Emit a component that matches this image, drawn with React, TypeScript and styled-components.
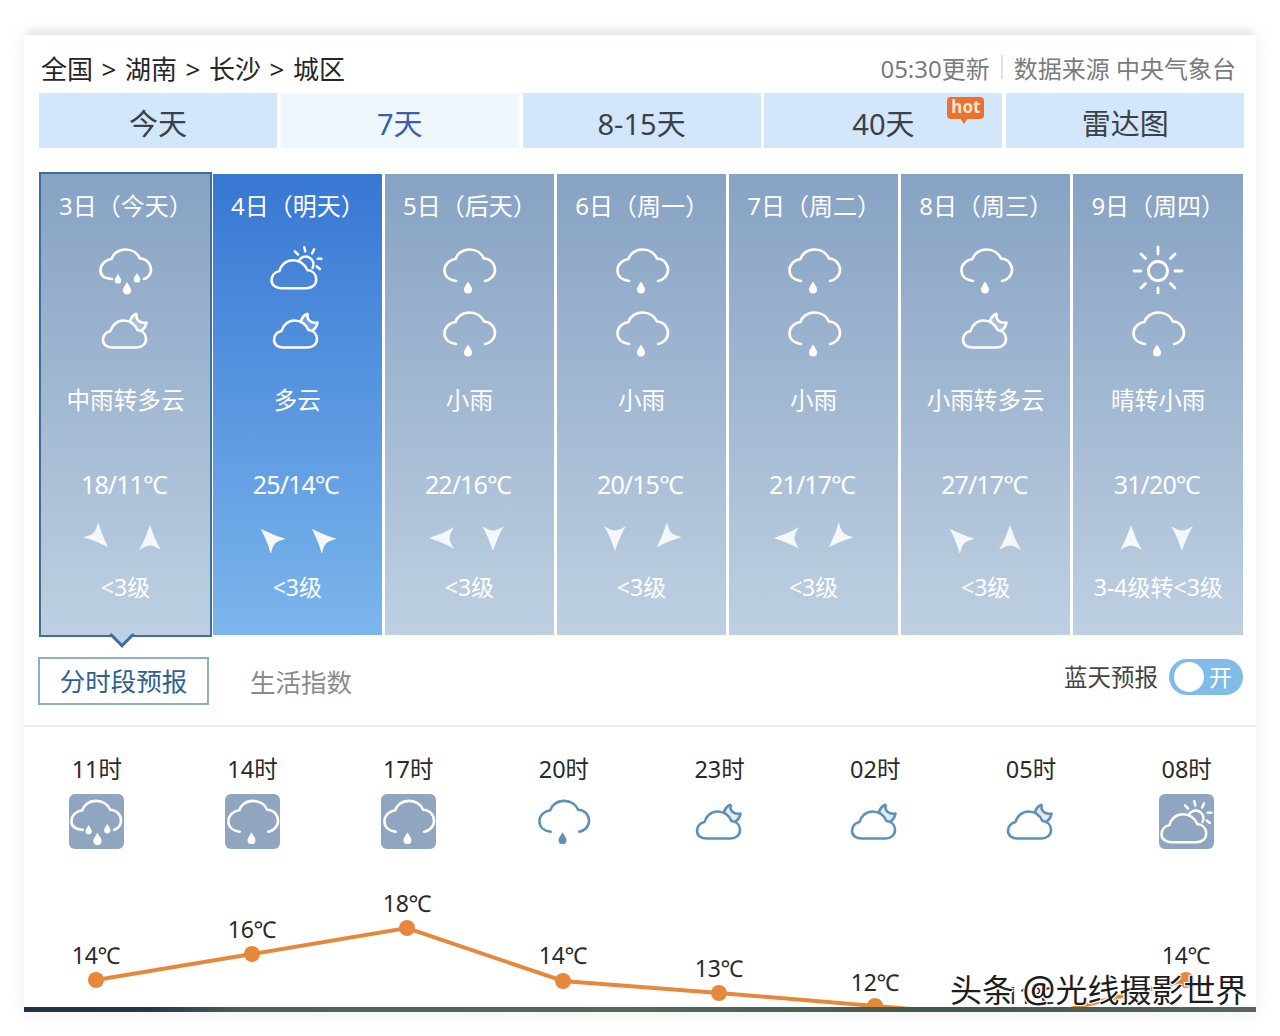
import React from "react";
import styled, { createGlobalStyle } from "styled-components";

const FONT = `"Noto Sans", "Noto Sans CJK SC", sans-serif`;

const Global = createGlobalStyle`
  html, body { margin: 0; padding: 0; background: #fff; font-family: ${FONT}; }
  body { height: 1036px; overflow: hidden; }
`;

const Page = styled.div`
  padding: 35px 24px 0;
  height: 1036px;
  box-sizing: border-box;
`;
const Card = styled.div`
  position: relative;
  width: 1232px;
  height: 977px;
  background: #fff;
  box-shadow: 0 0 16px rgba(110, 120, 130, 0.14), 0 -10px 5px -4px rgba(110, 120, 130, 0.1);
  overflow: hidden;
  display: flex;
  flex-direction: column;
`;
const Header = styled.div`
  display: flex;
  justify-content: space-between;
  align-items: center;
  height: 58px;
  padding: 0 20px 0 17px;
  box-sizing: border-box;
`;
const Crumb = styled.div`
  font-size: 26px;
  color: #262626;
  padding-top: 8px;
  word-spacing: 1.8px;
`;
const Meta = styled.div`
  font-size: 24px;
  color: #7b7b7b;
  padding-top: 6px;
  display: flex;
  align-items: center;
`;
const Sep = styled.span`
  width: 2px;
  height: 24px;
  background: #e2e2e2;
  margin: 0 11px;
`;
const Tabs = styled.div`
  display: grid;
  grid-template-columns: repeat(5, 238px);
  column-gap: 3.8px;
  margin-left: 15px;
  height: 55px;
`;
const Tab = styled.div<{ $on?: boolean }>`
  position: relative;
  display: flex;
  align-items: center;
  justify-content: center;
  background: ${(p) => (p.$on ? "#eef6fe" : "#d2e7fb")};
  color: ${(p) => (p.$on ? "#3c5fa6" : "#3a4148")};
  font-size: 29px;
  padding-top: 2px;
  box-sizing: border-box;
`;
const Hot = styled.span`
  position: absolute;
  left: 183px;
  top: 4px;
  width: 37px;
  height: 22px;
  border-radius: 4px;
  background: #e8732f;
  color: #f6e2d0;
  font: bold 17px/20px ${FONT};
  text-align: center;
  &::after {
    content: "";
    position: absolute;
    left: 13px;
    top: 21px;
    border: 4px solid transparent;
    border-top: 6px solid #e8732f;
    border-bottom: 0;
  }
`;
const Days = styled.div`
  display: flex;
  gap: 3.4px;
  margin: 26px 0 0 15px;
  height: 461px;
`;
const Day = styled.div<{ $active?: boolean; $sel?: boolean }>`
  position: relative;
  flex: none;
  width: ${(p) => (p.$sel ? 173 : 168.7)}px;
  box-sizing: border-box;
  color: #fff;
  display: flex;
  flex-direction: column;
  align-items: center;
  background: ${(p) =>
    p.$active
      ? "linear-gradient(#3777d4, #7cb6ec)"
      : "linear-gradient(#87a2c3, #bed0e2)"};
  ${(p) => (p.$sel ? `border: 2px solid #3f6f9e; margin: -2px -2.4px -2px 0;` : "")}
  &:last-child {
    width: 169.8px;
  }
`;
const Arrow = styled.span`
  position: absolute;
  left: 72px;
  bottom: -9px;
  width: 18px;
  height: 18px;
  transform: rotate(45deg);
  background: linear-gradient(135deg, transparent 50%, #bed0e2 50%);
  border-right: 3px solid #3f6f9e;
  border-bottom: 3px solid #3f6f9e;
  box-sizing: border-box;
`;
const DateText = styled.div`
  align-self: flex-start;
  margin: 16px 0 0 18px;
  font-size: 24px;
  height: 32px;
  line-height: 32px;
  white-space: nowrap;
`;
const IconSlot = styled.div<{ $top: number }>`
  height: 58px;
  margin-top: ${(p) => p.$top}px;
  display: flex;
  align-items: center;
  justify-content: center;
  color: #fff;
`;
const Desc = styled.div`
  margin-top: 24px;
  height: 32px;
  line-height: 32px;
  font-size: 23.6px;
  white-space: nowrap;
`;
const Temp = styled.div`
  margin: 51px 3px 0 0;
  height: 34px;
  line-height: 34px;
  font-size: 25px;
  letter-spacing: -0.9px;
  white-space: nowrap;
`;
const Winds = styled.div`
  margin: 22px 3px 0 0;
  display: flex;
  gap: 21px;
  height: 30px;
  align-items: center;
  justify-content: center;
`;
const Level = styled.div`
  margin-top: 18px;
  height: 32px;
  line-height: 32px;
  font-size: 23px;
  white-space: nowrap;
`;
const SubBar = styled.div`
  display: flex;
  align-items: center;
  height: 48px;
  margin: 22px 13px 0 14px;
`;
const SubOn = styled.div`
  width: 171px;
  height: 48px;
  box-sizing: border-box;
  border: 2px solid #8fadc9;
  color: #2c6292;
  font-size: 25.5px;
  line-height: 44px;
  text-align: center;
`;
const SubOff = styled.div`
  margin: -2px 0 0 41px;
  font-size: 25.5px;
  color: #8a8a8a;
`;
const Spacer = styled.div`
  flex: 1;
`;
const BlueLabel = styled.div`
  font-size: 23.5px;
  color: #444;
  margin-top: -10px;
`;
const Switch = styled.div`
  position: relative;
  margin: -8px 0 0 11px;
  width: 74px;
  height: 36px;
  border-radius: 18px;
  background: #80bce8;
  color: #fff;
  font-size: 23px;
  line-height: 36px;
  text-align: right;
  padding-right: 11px;
  box-sizing: border-box;
`;
const Knob = styled.span`
  position: absolute;
  left: 5px;
  top: 3px;
  width: 30px;
  height: 30px;
  border-radius: 50%;
  background: #fff;
`;
const Divider = styled.div`
  height: 2px;
  background: #eeeeee;
  margin-top: 20px;
`;
const Hours = styled.div`
  display: grid;
  grid-template-columns: repeat(8, 155.7px);
  margin: 25px 0 0 -5px;
`;
const Hour = styled.div`
  display: flex;
  flex-direction: column;
  align-items: center;
`;
const HourLabel = styled.div`
  font-size: 23.5px;
  line-height: 34px;
  color: #2a2a2a;
`;
const HourIcon = styled.div<{ $boxed?: boolean }>`
  margin-top: 8px;
  width: 55px;
  height: 55px;
  border-radius: 6px;
  display: flex;
  align-items: center;
  justify-content: center;
  background: ${(p) => (p.$boxed ? "#8fa5c0" : "transparent")};
  color: ${(p) => (p.$boxed ? "#fff" : "#5f90b8")};
`;
const Chart = styled.svg`
  position: absolute;
  left: 0;
  top: 0;
  pointer-events: none;
`;
const ChartLabel = styled.div`
  position: absolute;
  width: 80px;
  text-align: center;
  font-size: 23px;
  letter-spacing: -0.3px;
  line-height: 30px;
  color: #2a2a2a;
`;
const Strip = styled.div`
  position: absolute;
  left: 0;
  right: 0;
  bottom: 0;
  height: 5px;
  background: linear-gradient(90deg, #1f3440 0%, #22384a 10%, #4d6257 18%, #56695b 50%, #41594a 75%, #5a665e 100%);
`;
const Watermark = styled.div`
  position: absolute;
  left: 926px;
  top: 934px;
  font-size: 32px;
  line-height: 42px;
  color: #1d1d1d;
  white-space: nowrap;
  text-shadow: 1px 1px 0 #fff, -1px -1px 0 #fff, 1px -1px 0 #fff, -1px 1px 0 #fff;
`;
const AtMark = styled.span`
  font-size: 37px;
  line-height: 32px;
`;

const RAIN_CLOUD =
  "M14 38 C7 37 2.5 33 2.5 27.5 C2.5 21 8 16.5 13.5 16 C15 11 20 6.5 27.5 6.5 C35 6.5 40 11 42 15.5 C48 15.5 53 20.5 53 27 C53 33 48 37 43 38";
const DROP = (x: number, y: number, s = 1) =>
  `M${x} ${y} C${x - 3 * s} ${y + 5 * s} ${x - 4 * s} ${y + 6 * s} ${x - 4 * s} ${y + 8 * s} a${4 * s} ${4 * s} 0 0 0 ${8 * s} 0 C${x + 4 * s} ${y + 6 * s} ${x + 3 * s} ${y + 5 * s} ${x} ${y} Z`;

const LightRain = ({ dy = 0 }: { dy?: number }) => (
  <svg width="56" height="56" viewBox={`-1 ${-dy} 56 56`} fill="none" stroke="currentColor" strokeWidth="2.6" strokeLinecap="round">
    <path d={RAIN_CLOUD} />
    <path d={DROP(26, 38.5)} fill="currentColor" stroke="none" />
  </svg>
);
const MidRain = ({ dy = 0 }: { dy?: number }) => (
  <svg width="56" height="56" viewBox={`0 ${-dy} 56 56`} fill="none" stroke="currentColor" strokeWidth="2.6" strokeLinecap="round">
    <path d="M14 36 C7 35.5 2.5 33 2.5 27.5 C2.5 21 8 16.5 13.5 16 C15 11 20 6.5 27.5 6.5 C35 6.5 40 11 42 15.5 C48 15.5 53 20.5 53 27 C53 31 50 35 46 36" />
    <path d={DROP(20, 31, 0.8)} fill="currentColor" stroke="none" />
    <path d={DROP(39, 30, 0.8)} fill="currentColor" stroke="none" />
    <path d={DROP(29, 39, 1.05)} fill="currentColor" stroke="none" />
  </svg>
);
const CLOUD =
  "M11 35.5 H35 C40.5 35.5 44.5 32 44.5 27 C44.5 22 41 18.5 36 18 C33 11.5 28 8.5 22 8.5 C15 8.5 10.5 13.5 9 19 C4.5 20 1.5 23.5 1.5 28 C1.5 32.5 5.5 35.5 11 35.5 Z";
const MoonCloud = () => (
  <svg width="46" height="38" viewBox="1.5 0 46 38" overflow="visible" fill="none" stroke="currentColor" strokeWidth="2.6" strokeLinejoin="round">
    <path d={CLOUD} />
    <path d="M35.5 1.5 C33.5 7 38 12 45 10.5 C44.5 13.5 43 16.5 40 18.5" />
    <path d="M35.5 1.5 C31.5 3 29 6 28.5 10" />
    <path d="M35.5 1.5 C33.5 7 38 12 45 10.5 C44.5 13.5 43 16.5 40 18.5 L36 18 C35 15 32 12 28.5 10 C29 6 31.5 3 35.5 1.5 Z" fill="currentColor" fillOpacity="0.18" stroke="none" />
  </svg>
);
const SunCloud = () => (
  <svg width="54" height="46" viewBox="0 0 52 44" fill="none" stroke="currentColor" strokeWidth="2.4" strokeLinecap="round">
    <path d="M11 41.5 H35 C40.5 41.5 44.5 38 44.5 33 C44.5 28 41 24.5 36 24 C33 17.5 28 14.5 22 14.5 C15 14.5 10.5 19.5 9 25 C4.5 26 1.5 29.5 1.5 34 C1.5 38.5 5.5 41.5 11 41.5 Z" />
    <path d="M27.5 15.5 A7.5 7.5 0 1 1 41 22" />
    <path d="M33 2 L34 6 M42.5 4 L40.5 8 M49.5 13 H46 M48 23 L45 20.5 M24 6 L27 9" />
  </svg>
);
const Sun = ({ dy = 0 }: { dy?: number }) => (
  <svg width="52" height="52" viewBox={`0 ${-dy} 52 52`} fill="none" stroke="currentColor" strokeWidth="2.8" strokeLinecap="round">
    <circle cx="26" cy="26" r="9.5" />
    <path d="M26 2 V9 M26 43 V50 M2 26 H9 M43 26 H50 M9 9 L13.5 13.5 M38.5 38.5 L43 43 M43 9 L38.5 13.5 M13.5 38.5 L9 43" />
  </svg>
);
const WindArrow = ({ deg }: { deg: number }) => (
  <svg width="30" height="30" viewBox="-15 -15 30 30">
    <path
      d="M0 -13 C3 -4 7 6 11 12 C6 9 3 7.5 0 7.5 C-3 7.5 -6 9 -11 12 C-7 6 -3 -4 0 -13 Z"
      fill="#f4f8fc"
      transform={`rotate(${deg})`}
    />
  </svg>
);

type Kind = "rain" | "mid" | "moon" | "sun" | "suncloud";
const Weather = ({ k, dy = 0 }: { k: Kind; dy?: number }) =>
  k === "rain" ? (
    <LightRain dy={dy} />
  ) : k === "mid" ? (
    <MidRain dy={dy} />
  ) : k === "moon" ? (
    <MoonCloud />
  ) : k === "sun" ? (
    <Sun dy={dy} />
  ) : (
    <SunCloud />
  );

const days: { d: string; i: [Kind, Kind]; t: string; temp: string; w: [number, number]; l: string }[] = [
  { d: "3日（今天）", i: ["mid", "moon"], t: "中雨转多云", temp: "18/11℃", w: [135, 0], l: "<3级" },
  { d: "4日（明天）", i: ["suncloud", "moon"], t: "多云", temp: "25/14℃", w: [-45, -45], l: "<3级" },
  { d: "5日（后天）", i: ["rain", "rain"], t: "小雨", temp: "22/16℃", w: [-90, 180], l: "<3级" },
  { d: "6日（周一）", i: ["rain", "rain"], t: "小雨", temp: "20/15℃", w: [180, 225], l: "<3级" },
  { d: "7日（周二）", i: ["rain", "rain"], t: "小雨", temp: "21/17℃", w: [-90, 225], l: "<3级" },
  { d: "8日（周三）", i: ["rain", "moon"], t: "小雨转多云", temp: "27/17℃", w: [-45, 0], l: "<3级" },
  { d: "9日（周四）", i: ["sun", "rain"], t: "晴转小雨", temp: "31/20℃", w: [0, 180], l: "3-4级转<3级" },
];

const hours: { h: string; k: Kind; boxed?: boolean }[] = [
  { h: "11时", k: "mid", boxed: true },
  { h: "14时", k: "rain", boxed: true },
  { h: "17时", k: "rain", boxed: true },
  { h: "20时", k: "rain" },
  { h: "23时", k: "moon" },
  { h: "02时", k: "moon" },
  { h: "05时", k: "moon" },
  { h: "08时", k: "suncloud", boxed: true },
];

// chart coordinates relative to the card
const pts = [
  { x: 72, y: 945, t: "14℃", ly: 905 },
  { x: 228, y: 919, t: "16℃", ly: 879 },
  { x: 383, y: 893, t: "18℃", ly: 853 },
  { x: 539, y: 946, t: "14℃", ly: 905 },
  { x: 695, y: 958, t: "13℃", ly: 918 },
  { x: 851, y: 971, t: "12℃", ly: 932 },
  { x: 1006, y: 984, t: "11℃", ly: 945 },
  { x: 1162, y: 945, t: "14℃", ly: 905 },
];

export default function App() {
  return (
    <Page>
      <Global />
      <Card>
        <Header>
          <Crumb>全国 &gt; 湖南 &gt; 长沙 &gt; 城区</Crumb>
          <Meta>
            05:30更新
            <Sep />
            数据来源 中央气象台
          </Meta>
        </Header>
        <Tabs>
          <Tab>今天</Tab>
          <Tab $on>7天</Tab>
          <Tab>8-15天</Tab>
          <Tab>
            40天<Hot>hot</Hot>
          </Tab>
          <Tab>雷达图</Tab>
        </Tabs>
        <Days>
          {days.map((d, i) => (
            <Day key={d.d} $sel={i === 0} $active={i === 1}>
              <DateText>{d.d}</DateText>
              <IconSlot $top={17}>
                <Weather k={d.i[0]} dy={3} />
              </IconSlot>
              <IconSlot $top={5}>
                <Weather k={d.i[1]} dy={3} />
              </IconSlot>
              <Desc>{d.t}</Desc>
              <Temp>{d.temp}</Temp>
              <Winds>
                <WindArrow deg={d.w[0]} />
                <WindArrow deg={d.w[1]} />
              </Winds>
              <Level>{d.l}</Level>
              {i === 0 && <Arrow />}
            </Day>
          ))}
        </Days>
        <SubBar>
          <SubOn>分时段预报</SubOn>
          <SubOff>生活指数</SubOff>
          <Spacer />
          <BlueLabel>蓝天预报</BlueLabel>
          <Switch>
            <Knob />开
          </Switch>
        </SubBar>
        <Divider />
        <Hours>
          {hours.map((h) => (
            <Hour key={h.h}>
              <HourLabel>{h.h}</HourLabel>
              <HourIcon $boxed={h.boxed}>
                <Weather k={h.k} />
              </HourIcon>
            </Hour>
          ))}
        </Hours>
        <Chart width="1232" height="977" viewBox="0 0 1232 977">
          <polyline
            points={pts.map((p) => `${p.x},${p.y}`).join(" ")}
            fill="none"
            stroke="#e6883c"
            strokeWidth="4"
          />
          {pts.map((p) => (
            <circle key={p.x} cx={p.x} cy={p.y} r="8" fill="#e6883c" />
          ))}
        </Chart>
        {pts.map((p) => (
          <ChartLabel key={p.x} style={{ left: p.x - 40, top: p.ly }}>
            {p.t}
          </ChartLabel>
        ))}
        <Strip />
        <Watermark>
          头条 <AtMark>@</AtMark>光线摄影世界
        </Watermark>
      </Card>
    </Page>
  );
}
